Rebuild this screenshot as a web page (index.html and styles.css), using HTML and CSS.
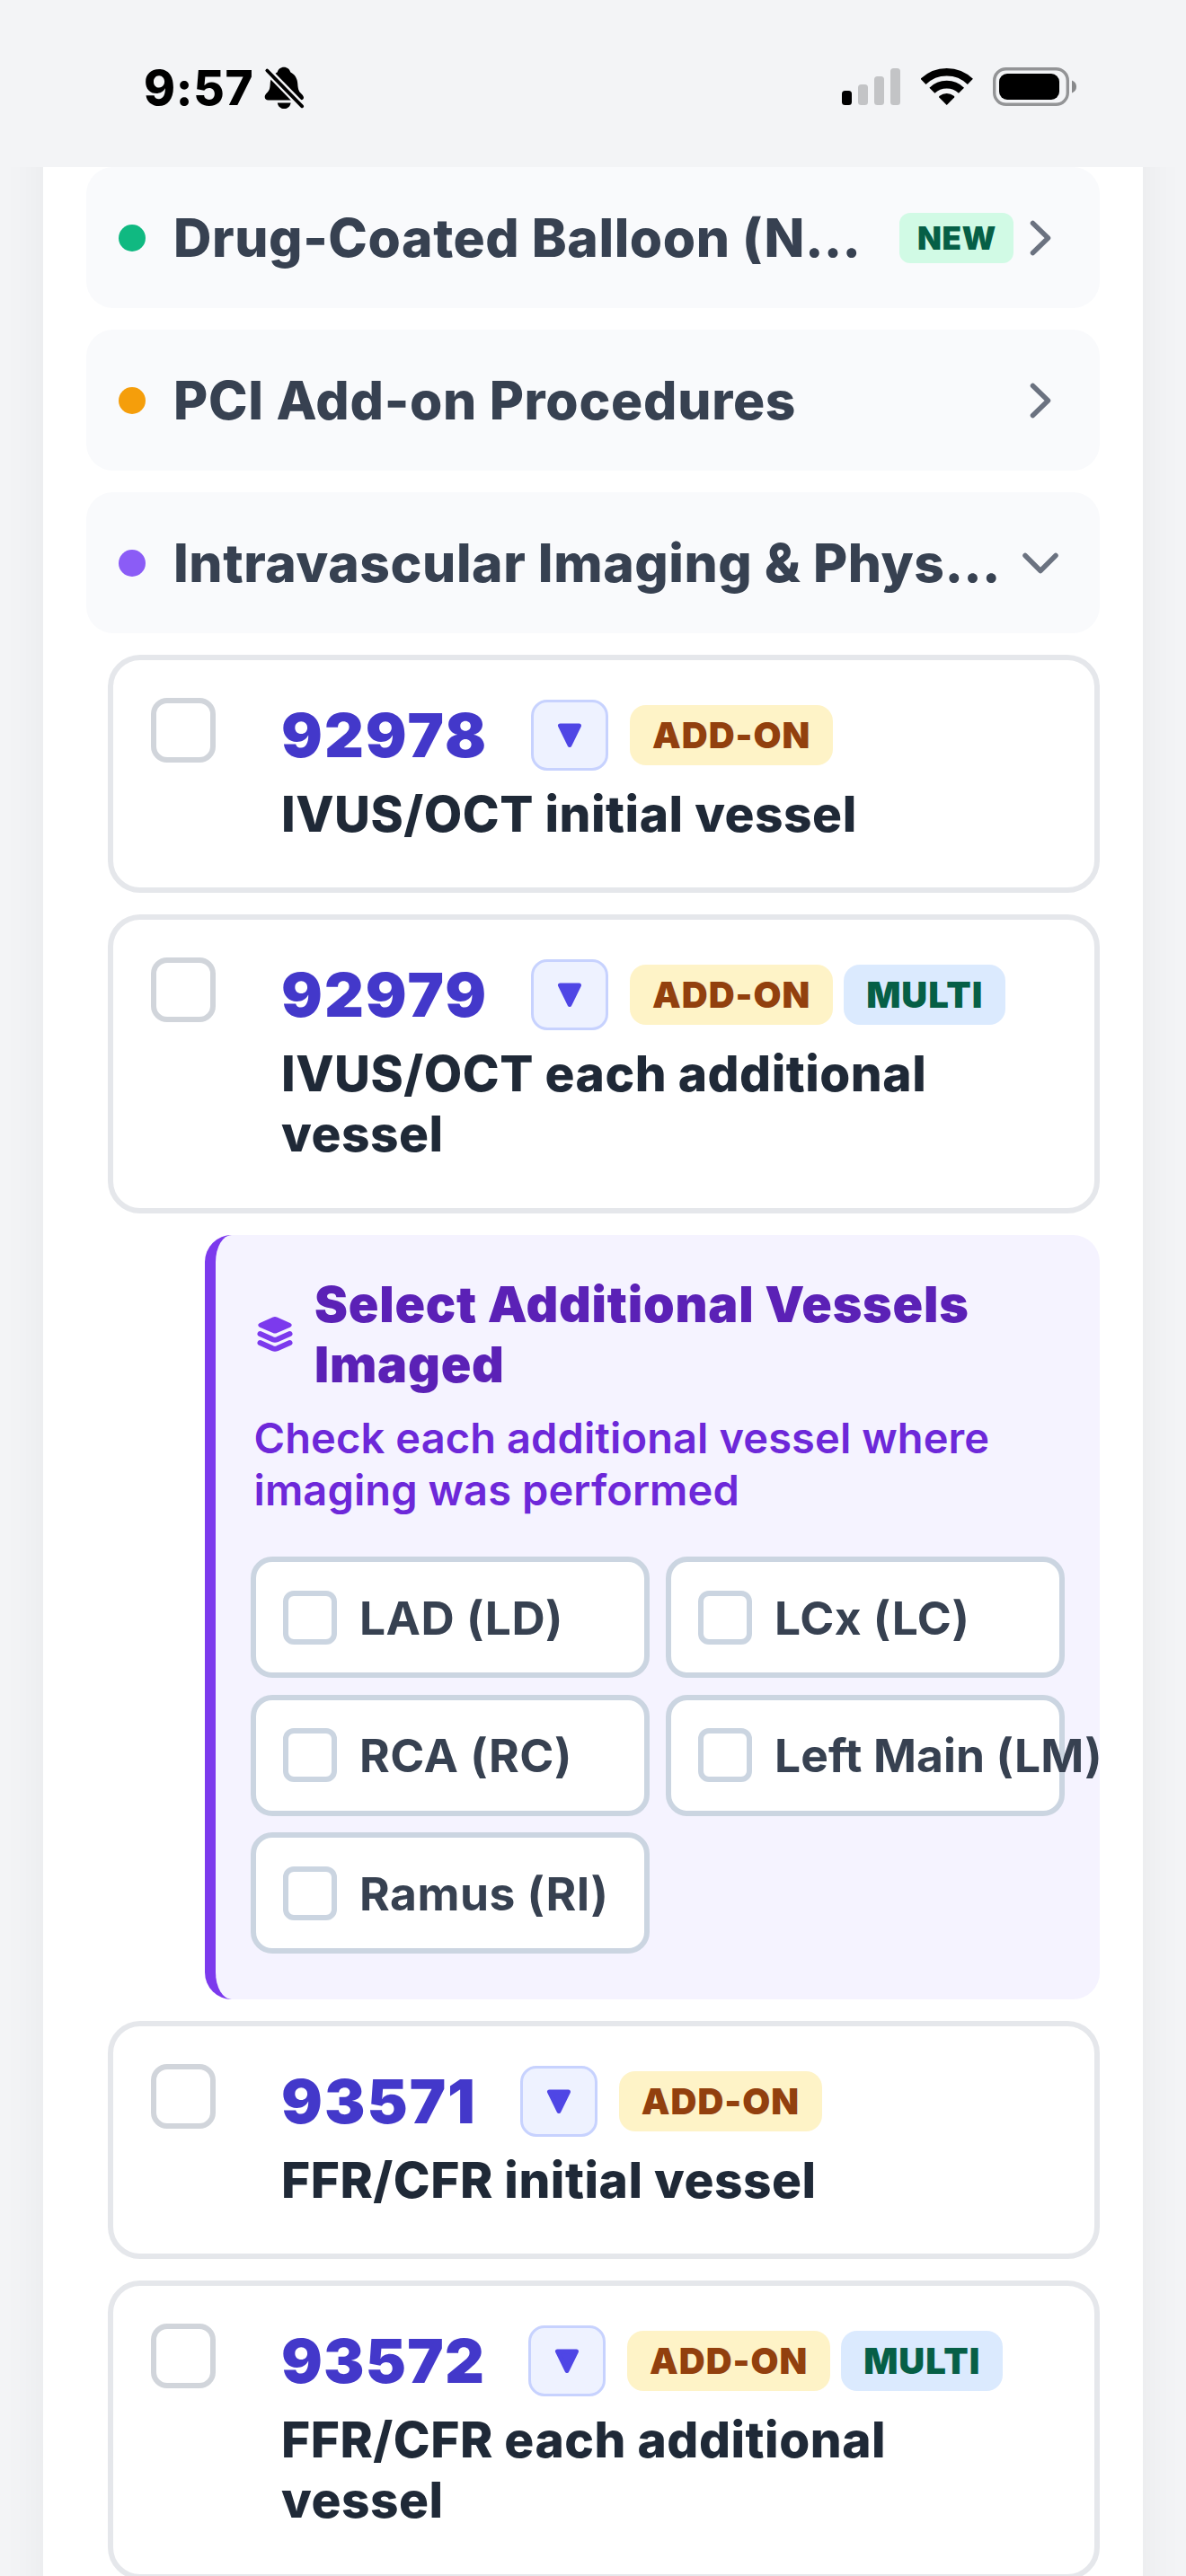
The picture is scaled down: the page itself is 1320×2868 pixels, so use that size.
FILE: index.html
```html
<!DOCTYPE html>
<html lang="en">
<head>
<meta charset="utf-8">
<title>Procedure codes</title>
<link rel="stylesheet" href="styles.css">
</head>
<body>
<header class="status-bar">
  <div class="status-left">
    <span class="time">9:57</span>
    <svg class="bell" width="45" height="48" viewBox="0 0 45 48">
      <path d="M22 .7C25.600 .7 28.300 3 29.200 6.200C34.500 9 37 13.500 37.300 19.500C37.600 26 39 28 41.500 30.500C43.300 32.300 44.100 33.600 44 35C43.800 36.600 42.500 37.500 40.500 37.500H4.500C2.300 37.500 .700 36 .700 34C.700 32.300 1.500 31 3 29.500C5.800 26.800 6.400 25 6.700 19.500C7 13.500 9.500 9 14.800 6.200C15.700 3 18.400 .7 22 .7Z"/>
      <path d="M14.800 40.400H29.600C29 44.500 26 47 22.200 47C18.400 47 15.400 44.500 14.800 40.400Z"/>
      <path class="bell-gap" d="M0 1L45 47.200"/>
      <path class="bell-slash" d="M3.300 4.500L42.200 44.300"/>
    </svg>
  </div>
  <div class="status-right">
    <svg width="66" height="46" viewBox="0 0 66 46">
      <rect x="0" y="26" width="11" height="16" rx="3.500"/>
      <g fill="#c3c4c6">
        <rect x="18" y="19" width="11" height="23" rx="3.500"/>
        <rect x="36" y="10" width="11" height="32" rx="3.500"/>
        <rect x="54" y="1" width="11" height="41" rx="3.500"/>
      </g>
    </svg>
    <svg width="58" height="46" viewBox="0 0 58 46">
      <g fill="none" stroke="#000" stroke-width="8.600">
        <path d="M2.500 15.900A37.400 37.400 0 0 1 54.900 15.900"/>
        <path d="M12.400 25.800A23.200 23.200 0 0 1 45 25.800"/>
      </g>
      <path d="M28.700 42L20.300 33.400Q19.700 32.500 20.700 31.700A13.500 13.500 0 0 1 36.700 31.700Q37.700 32.500 37.100 33.400Z"/>
    </svg>
    <svg width="94" height="46" viewBox="0 0 94 46">
      <rect x="1.700" y="1.700" width="81.600" height="39.600" rx="13" fill="none" stroke="#939496" stroke-width="3.400"/>
      <rect x="7" y="7" width="67" height="29" rx="9"/>
      <path d="M88 14.500Q93 16.500 93 21.500T88 28.500Z" fill="#88898b"/>
    </svg>
  </div>
</header>

<main class="viewport">
  <div class="sheet">
    <section class="category">
      <i class="dot dot-green"></i>
      <h2 class="category-name">Drug-Coated Balloon (N…</h2>
      <span class="new-badge">NEW</span>
      <svg class="chevron" viewBox="0 0 60 60"><path d="M21.500 13.500L38.500 30L21.500 46.500"/></svg>
    </section>
    <section class="category">
      <i class="dot dot-amber"></i>
      <h2 class="category-name category-name-loose">PCI Add-on Procedures</h2>
      <svg class="chevron" viewBox="0 0 60 60"><path d="M21.500 13.500L38.500 30L21.500 46.500"/></svg>
    </section>
    <section class="category">
      <i class="dot dot-violet"></i>
      <h2 class="category-name">Intravascular Imaging &amp; Phys…</h2>
      <svg class="chevron" viewBox="0 0 60 60"><path d="M13 21.500L30 38.500L47 21.500"/></svg>
    </section>

    <div class="procedures">
      <article class="card">
        <span class="checkbox"></span>
        <div class="card-body">
          <div class="card-head">
            <span class="code">92978</span>
            <span class="toggle"><svg viewBox="0 0 28 28"><path d="M3.500 3H24.500L14 24.500Z"/></svg></span>
            <div class="tags"><span class="tag tag-addon">ADD-ON</span></div>
          </div>
          <p class="desc">IVUS/OCT initial vessel</p>
        </div>
      </article>

      <article class="card card-tall">
        <span class="checkbox"></span>
        <div class="card-body">
          <div class="card-head">
            <span class="code">92979</span>
            <span class="toggle"><svg viewBox="0 0 28 28"><path d="M3.500 3H24.500L14 24.500Z"/></svg></span>
            <div class="tags"><span class="tag tag-addon">ADD-ON</span><span class="tag tag-multi">MULTI</span></div>
          </div>
          <p class="desc">IVUS/OCT each additional<br>vessel</p>
        </div>
      </article>

      <div class="vessels">
        <div class="vessels-head">
          <svg class="layers" viewBox="0 0 48 48">
            <path class="layer-top" d="M22 6.300Q24 5.400 26 6.300L40.500 12.600Q43.500 14.300 40.500 16L26 22.300Q24 23.200 22 22.300L7.500 16Q4.500 14.300 7.500 12.600Z"/>
            <path class="layer-band" d="M7.500 24L21.500 30.200Q24 31.200 26.500 30.200L40.500 24"/>
            <path class="layer-band" d="M7.500 34L21.500 40.200Q24 41.200 26.500 40.200L40.500 34"/>
          </svg>
          <h3 class="vessels-title">Select Additional Vessels<br>Imaged</h3>
        </div>
        <p class="vessels-hint">Check each additional vessel where<br>imaging was performed</p>
        <div class="options">
          <label class="option"><span class="box"></span><span class="option-name">LAD (LD)</span></label>
          <label class="option"><span class="box"></span><span class="option-name">LCx (LC)</span></label>
          <label class="option"><span class="box"></span><span class="option-name">RCA (RC)</span></label>
          <label class="option"><span class="box"></span><span class="option-name long">Left Main (LM)</span></label>
          <label class="option"><span class="box"></span><span class="option-name">Ramus (RI)</span></label>
        </div>
      </div>

      <article class="card">
        <span class="checkbox"></span>
        <div class="card-body">
          <div class="card-head">
            <span class="code">93571</span>
            <span class="toggle"><svg viewBox="0 0 28 28"><path d="M3.500 3H24.500L14 24.500Z"/></svg></span>
            <div class="tags"><span class="tag tag-addon">ADD-ON</span></div>
          </div>
          <p class="desc">FFR/CFR initial vessel</p>
        </div>
      </article>

      <article class="card card-tall">
        <span class="checkbox"></span>
        <div class="card-body">
          <div class="card-head">
            <span class="code code-tight">93572</span>
            <span class="toggle"><svg viewBox="0 0 28 28"><path d="M3.500 3H24.500L14 24.500Z"/></svg></span>
            <div class="tags"><span class="tag tag-addon">ADD-ON</span><span class="tag tag-multi">MULTI</span></div>
          </div>
          <p class="desc">FFR/CFR each additional<br>vessel</p>
        </div>
      </article>
    </div>
  </div>
</main>
</body>
</html>
```
FILE: styles.css
```css
* { box-sizing: border-box; }

html, body {
  height: 2868px;
  overflow: hidden;
}

body {
  margin: 0;
  background: #f3f4f6;
  font-family: Inter, "Liberation Sans", sans-serif;
  color: #1f2937;
}

h2, h3, p { margin: 0; }
svg { display: block; flex: none; }

/* Status bar */
.status-bar {
  display: flex;
  justify-content: space-between;
  align-items: center;
  height: 186px;
  padding: 10px 121px 0 160px;
}
.status-left { display: flex; align-items: center; gap: 11px; }
.status-right { display: flex; align-items: center; gap: 22px; }
.time {
  width: 123px;
  font-size: 53px;
  font-weight: 800;
  line-height: 64px;
  letter-spacing: .700px;
  white-space: nowrap;
  color: #000;
}
.bell-gap { stroke: #f3f4f6; stroke-width: 8.500; }
.bell-slash { stroke: #000; stroke-width: 3.800; stroke-linecap: round; }

/* Scrolling sheet */
.viewport {
  height: 2682px;
  overflow: hidden;
}
.sheet {
  display: flex;
  flex-direction: column;
  gap: 24px;
  margin: -120px 48px 0;
  padding: 120px 48px 200px;
  background: #fff;
  box-shadow: 0 12px 48px rgba(0, 0, 0, .05);
}

/* Category headers */
.category {
  display: flex;
  align-items: center;
  height: 157px;
  padding: 0 36px;
  border-radius: 30px;
  background: #f9fafc;
}
.dot {
  flex: none;
  width: 30px;
  height: 30px;
  border-radius: 50%;
}
.dot-green { background: #10b981; }
.dot-amber { background: #f59e0b; }
.dot-violet { background: #8b5cf6; }
.category-name {
  flex: 1;
  min-width: 0;
  margin-left: 31px;
  font-size: 58.700px;
  font-weight: 800;
  line-height: 72px;
  letter-spacing: .570px;
  white-space: nowrap;
  color: #374151;
}
.category-name-loose { letter-spacing: .720px; }
.new-badge {
  width: 127px;
  height: 56px;
  padding-left: 20px;
  border-radius: 12px;
  background: #d1fae5;
  color: #065f46;
  font-size: 35px;
  font-weight: 900;
  line-height: 56px;
  letter-spacing: .500px;
}
.chevron { width: 60px; height: 60px; }
.chevron path {
  fill: none;
  stroke: #6b7280;
  stroke-width: 5.500;
  stroke-linecap: round;
  stroke-linejoin: round;
}

/* Procedure cards */
.procedures {
  display: flex;
  flex-direction: column;
  gap: 24px;
  margin-left: 24px;
}
.card {
  display: flex;
  align-items: flex-start;
  gap: 73px;
  min-height: 265px;
  padding: 42px;
  border: 6px solid #e5e7eb;
  border-radius: 36px;
  background: #fff;
}
.card-tall { min-height: 333px; }
.checkbox {
  flex: none;
  width: 72px;
  height: 72px;
  border: 6px solid #d1d5db;
  border-radius: 18px;
}
.card-body { flex: 1; }
.card-head {
  display: flex;
  align-items: center;
  height: 83px;
}
.code {
  margin-right: 48px;
  font-size: 68px;
  font-weight: 900;
  line-height: 83px;
  letter-spacing: 2px;
  color: #4338ca;
}
.code-tight { letter-spacing: 1.200px; }
.toggle {
  display: flex;
  align-items: center;
  justify-content: center;
  width: 86px;
  height: 79px;
  margin-right: 24px;
  border: 3px solid #c7d2fe;
  border-radius: 18px;
  background: #eef2ff;
}
.toggle svg { width: 28px; height: 28px; }
.toggle path {
  fill: #4f46e5;
  stroke: #4f46e5;
  stroke-width: 5;
  stroke-linejoin: round;
}
.tags { display: flex; gap: 12px; }
.tag {
  height: 67px;
  padding: 0 25px;
  border-radius: 18px;
  font-size: 40px;
  font-weight: 900;
  line-height: 67px;
  letter-spacing: .950px;
}
.tag-addon { background: #fef3c7; color: #92400e; }
.tag-multi { background: #dbeafe; color: #065f46; }
.desc {
  margin-top: 13px;
  font-size: 55px;
  font-weight: 800;
  line-height: 67px;
  letter-spacing: .500px;
  white-space: nowrap;
}

/* Vessel picker */
.vessels {
  height: 851px;
  margin-left: 108px;
  padding: 43px 39px 0;
  border-left: 12px solid #7c3aed;
  border-radius: 30px;
  background: #f5f3ff;
}
.vessels-head {
  display: flex;
  align-items: center;
  margin-left: 3px;
}
.layers { width: 48px; height: 48px; margin-right: 20px; }
.layer-top { fill: #7c3aed; stroke: #7c3aed; stroke-width: 1.500; stroke-linejoin: round; }
.layer-band { fill: none; stroke: #7c3aed; stroke-width: 6; stroke-linecap: round; }
.vessels-title {
  font-size: 55.500px;
  font-weight: 900;
  line-height: 67px;
  letter-spacing: .780px;
  white-space: nowrap;
  color: #5b21b6;
}
.vessels-hint {
  margin: 20px 0 45px 3.500px;
  font-size: 47px;
  font-weight: 600;
  line-height: 58px;
  letter-spacing: .100px;
  white-space: nowrap;
  color: #6d28d9;
}
.options {
  display: grid;
  grid-template-columns: 444px 444px;
  grid-auto-rows: 135px;
  gap: 18.500px 18px;
}
.option {
  display: flex;
  align-items: center;
  gap: 25px;
  padding: 0 30px;
  border: 6px solid #cbd5e1;
  border-radius: 24px;
  background: #fff;
}
.box {
  flex: none;
  width: 60px;
  height: 60px;
  border: 6px solid #cbd5e1;
  border-radius: 12px;
}
.option-name {
  font-size: 51.500px;
  font-weight: 700;
  line-height: 64px;
  letter-spacing: .500px;
  white-space: nowrap;
  color: #374151;
}
.option-name.long { letter-spacing: .120px; }
```
